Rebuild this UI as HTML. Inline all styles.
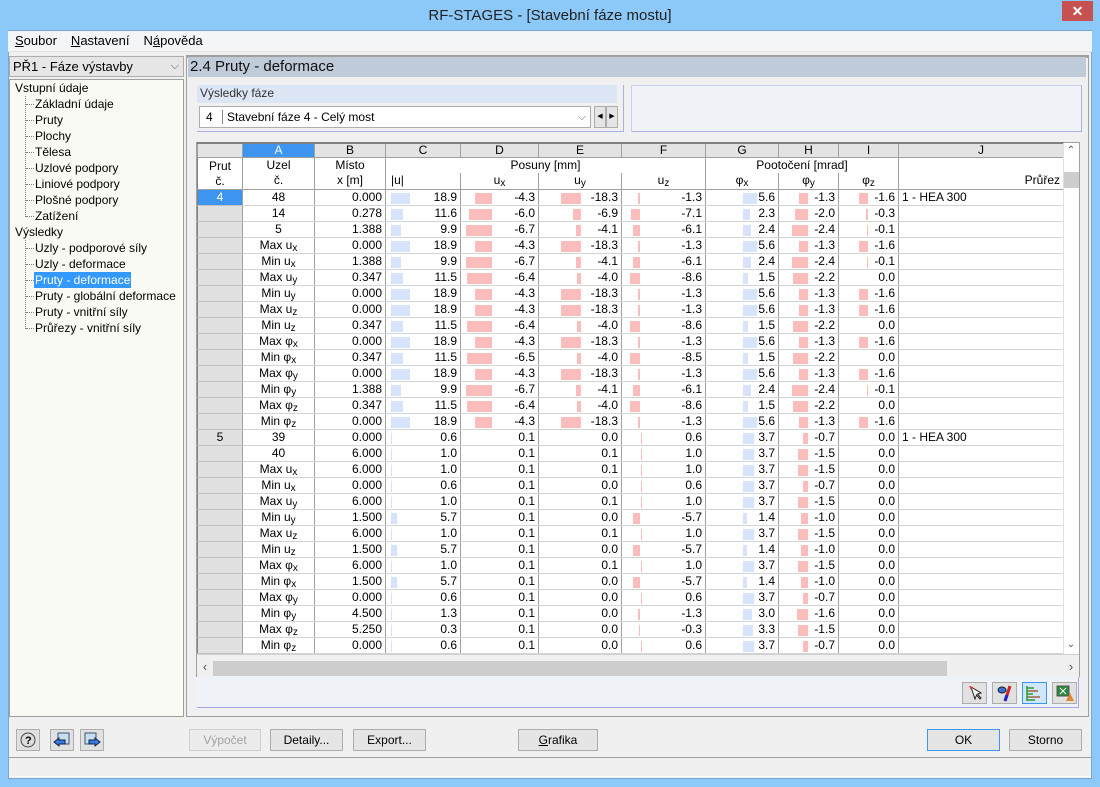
<!DOCTYPE html>
<html><head><meta charset="utf-8"><style>
*{box-sizing:border-box;margin:0;padding:0}
body{width:1100px;height:787px;position:relative;overflow:hidden;background:#8cc8f8;font-family:"Liberation Sans",Arial,sans-serif;font-size:12px;color:#000}
.abs{position:absolute}
#title{left:0;top:0;width:1100px;height:30px;text-align:center;font-size:15px;line-height:32px;color:#222}
#close{left:1062px;top:1px;width:31px;height:20px;background:#c75050;color:#fff;text-align:center;font-size:14px;font-weight:bold;line-height:20px}
#client{left:8px;top:30px;width:1084px;height:749px;background:#f0f0f0;border:1px solid #7aa6d0}
#menu{left:8px;top:31px;width:1084px;height:21px;background:#f4f5f7;font-size:13px;line-height:20px;border-bottom:1px solid #e3e3e3}
#menu span{margin-left:7px;margin-right:7px}
u{text-decoration:underline}
#combo{left:9px;top:56px;width:175px;height:21px;background:#e6e6e6;border:1px solid #adadad;font-size:13px;line-height:19px;padding-left:3px}
#tree{left:9px;top:79px;width:175px;height:638px;background:#fafaf4;border:1px solid #a0a0a0;font-size:12px}
#tree div{position:absolute;height:16px;line-height:16px;white-space:nowrap}
#tree .d{position:absolute;border-top:1px dotted #808080;width:8px}
#tree .v{position:absolute;border-left:1px dotted #808080}
#rpanel{left:186px;top:55px;width:903px;height:662px;border:1px solid #a0a0a0;border-top:3px solid #a0a0a0;background:#f0f0f0}
#hdr{left:188px;top:57px;width:898px;height:20px;background:#bfcbd8;font-size:15px;line-height:20px;padding-left:2px;color:#111}
#grp{left:197px;top:85px;width:427px;height:47px;border-right:1px solid #aab0e0;border-bottom:1px solid #aab0e0}
#grplab{left:197px;top:85px;width:420px;height:18px;background:#dde6f4;font-size:12px;line-height:17px;padding-left:3px;color:#333}
#sel{left:199px;top:106px;width:392px;height:22px;background:#fff;border:1px solid #adadad;line-height:20px;padding-left:6px}
#info{left:631px;top:85px;width:451px;height:47px;background:#eff2f7;border:1px solid #c8cff0;border-right-color:#aab0e0;border-bottom-color:#aab0e0}
table{position:absolute;left:197px;top:142px;border-collapse:collapse;table-layout:fixed;width:866px;font-size:12px}
tr{height:16px}
td,th{height:16px;padding:0 3px 0 0;text-align:right;white-space:nowrap;overflow:hidden;font-weight:normal;position:relative;border-right:1px solid #a0a0a0;border-bottom:1px solid #d4d4d4;line-height:15px;background:#fff}
tr.L{height:14px}
tr.L th,tr.L td{height:14px;line-height:12px;background:#e3e3e3;text-align:center;border:1px solid #a0a0a0;border-top:2px solid #808080;padding:0}
tr.S th,tr.S td{background:#fff;text-align:center;padding:0;border-bottom:none;line-height:15px}
tr.S2 td{border-bottom:1px solid #a0a0a0}
th.rh{background:#e1e1e1;text-align:center;padding:0;border:1px solid #a0a0a0;border-bottom:1px solid #c0c0c0;border-left:1px solid #808080}
th.sel{background:#3d95f0;color:#fff}
td.c{text-align:center;padding:0}
td.j{text-align:left;padding-left:3px}
sub{font-size:10px;line-height:0;vertical-align:-2px}
i{position:absolute;top:3px;height:11px;background:#fbbcbc;width:0}
td:nth-child(4) i{left:5px;background:#d7e3fa}
td:nth-child(5) i{right:46px}
td:nth-child(6) i{right:40px}
td:nth-child(7) i{right:65px}
td:nth-child(8) i{left:37px;background:#d7e3fa}
td:nth-child(9) i{right:30px}
td:nth-child(10) i{right:30px}
.p1 td:nth-child(4) i{width:19px}.p1 td:nth-child(5) i{width:17px}.p1 td:nth-child(6) i{width:20px}.p1 td:nth-child(7) i{width:2px}.p1 td:nth-child(8) i{width:14px}.p1 td:nth-child(9) i{width:9px}.p1 td:nth-child(10) i{width:9px}
.p2 td:nth-child(4) i{width:12px}.p2 td:nth-child(5) i{width:23px}.p2 td:nth-child(6) i{width:8px}.p2 td:nth-child(7) i{width:9px}.p2 td:nth-child(8) i{width:7px}.p2 td:nth-child(9) i{width:13px}.p2 td:nth-child(10) i{width:2px}
.p3 td:nth-child(4) i{width:10px}.p3 td:nth-child(5) i{width:26px}.p3 td:nth-child(6) i{width:5px}.p3 td:nth-child(7) i{width:7px}.p3 td:nth-child(8) i{width:8px}.p3 td:nth-child(9) i{width:16px}.p3 td:nth-child(10) i{width:1px}
.p4 td:nth-child(4) i{width:12px}.p4 td:nth-child(5) i{width:25px}.p4 td:nth-child(6) i{width:4px}.p4 td:nth-child(7) i{width:10px}.p4 td:nth-child(8) i{width:5px}.p4 td:nth-child(9) i{width:15px}
.q1 td:nth-child(4) i{width:1px}.q1 td:nth-child(7) i{width:1px;left:19px;right:auto}.q1 td:nth-child(8) i{width:11px}.q1 td:nth-child(9) i{width:5px}
.q2 td:nth-child(4) i{width:1px}.q2 td:nth-child(7) i{width:1px;left:19px;right:auto}.q2 td:nth-child(8) i{width:11px}.q2 td:nth-child(9) i{width:10px}
.q3 td:nth-child(4) i{width:6px}.q3 td:nth-child(7) i{width:7px}.q3 td:nth-child(8) i{width:4px}.q3 td:nth-child(9) i{width:7px}
.q4 td:nth-child(4) i{width:1px}.q4 td:nth-child(7) i{width:2px}.q4 td:nth-child(8) i{width:9px}.q4 td:nth-child(9) i{width:11px}
.q5 td:nth-child(4) i{width:1px}.q5 td:nth-child(7) i{width:1px}.q5 td:nth-child(8) i{width:10px}.q5 td:nth-child(9) i{width:10px}
.btn{position:absolute;top:729px;height:22px;background:#e5e5e5;border:1px solid #adadad;text-align:center;line-height:20px;font-size:12px}
.ib{position:absolute;top:729px;width:24px;height:22px;background:#e1e1e1;border:1px solid #adadad}
.tb{position:absolute;top:682px;width:25px;height:22px;background:#e1e1e1;border:1px solid #adadad}
</style></head><body>
<div id="title" class="abs">RF-STAGES - [Stavební fáze mostu]</div>
<div id="close" class="abs">✕</div>
<div id="client" class="abs"></div>
<div id="menu" class="abs"><span><u>S</u>oubor</span><span><u>N</u>astavení</span><span>N<u>á</u>pověda</span></div>
<div id="combo" class="abs">PŘ1 - Fáze výstavby<span style="position:absolute;right:4px;top:0;color:#555;font-size:11px">⌵</span></div>
<div id="tree" class="abs">
<div style="left:5px;top:0px">Vstupní údaje</div>
<span class="v" style="left:15px;top:16px;height:121px"></span>
<div style="left:25px;top:16px">Základní údaje</div><span class="d" style="left:16px;top:24px"></span>
<div style="left:25px;top:32px">Pruty</div><span class="d" style="left:16px;top:40px"></span>
<div style="left:25px;top:48px">Plochy</div><span class="d" style="left:16px;top:56px"></span>
<div style="left:25px;top:64px">Tělesa</div><span class="d" style="left:16px;top:72px"></span>
<div style="left:25px;top:80px">Uzlové podpory</div><span class="d" style="left:16px;top:88px"></span>
<div style="left:25px;top:96px">Liniové podpory</div><span class="d" style="left:16px;top:104px"></span>
<div style="left:25px;top:112px">Plošné podpory</div><span class="d" style="left:16px;top:120px"></span>
<div style="left:25px;top:128px">Zatížení</div><span class="d" style="left:16px;top:136px"></span>
<div style="left:5px;top:144px">Výsledky</div>
<span class="v" style="left:15px;top:160px;height:89px"></span>
<div style="left:25px;top:160px">Uzly - podporové síly</div><span class="d" style="left:16px;top:168px"></span>
<div style="left:25px;top:176px">Uzly - deformace</div><span class="d" style="left:16px;top:184px"></span>
<div style="left:24px;top:192px;background:#3399ff;color:#fff;padding:0 1px">Pruty - deformace</div><span class="d" style="left:16px;top:200px"></span>
<div style="left:25px;top:208px">Pruty - globální deformace</div><span class="d" style="left:16px;top:216px"></span>
<div style="left:25px;top:224px">Pruty - vnitřní síly</div><span class="d" style="left:16px;top:232px"></span>
<div style="left:25px;top:240px">Průřezy - vnitřní síly</div><span class="d" style="left:16px;top:248px"></span>
</div>
<div id="rpanel" class="abs"></div>
<div id="hdr" class="abs">2.4 Pruty - deformace</div>
<div id="grp" class="abs"></div>
<div id="grplab" class="abs">Výsledky fáze</div>
<div id="sel" class="abs">4 <span style="border-left:1px solid #888;margin:0 4px 0 6px"></span>Stavební fáze 4 - Celý most<span style="position:absolute;right:4px;top:0;color:#666;font-size:11px">⌵</span></div>
<div class="abs" style="left:594px;top:106px;width:12px;height:22px;border:1px solid #adadad;background:#e5e5e5;font-size:7px;line-height:20px;text-align:center">◀</div>
<div class="abs" style="left:606px;top:106px;width:12px;height:22px;border:1px solid #adadad;background:#e5e5e5;font-size:7px;line-height:20px;text-align:center">▶</div>
<div id="info" class="abs"></div>
<div class="abs" style="left:196px;top:142px;width:884px;height:535px;background:#fff;border:1px solid #a0a0a0"></div>
<table>
<colgroup><col style="width:45px"><col style="width:72px"><col style="width:71px"><col style="width:75px"><col style="width:78px"><col style="width:83px"><col style="width:84px"><col style="width:73px"><col style="width:60px"><col style="width:60px"><col style="width:165px"></colgroup>
<tr class="L"><th style="background:#e3e3e3;border-top:2px solid #808080"></th><td style="background:#3d95f0;color:#fff">A</td><td>B</td><td>C</td><td>D</td><td>E</td><td>F</td><td>G</td><td>H</td><td>I</td><td>J</td></tr>
<tr class="S"><th class="rh" rowspan="2" style="border-bottom:1px solid #a0a0a0;vertical-align:top;padding-top:1px;line-height:15px">Prut<br>č.</th><td>Uzel</td><td>Místo</td><td colspan="4">Posuny [mm]</td><td colspan="3">Pootočení [mrad]</td><td></td></tr>
<tr class="S S2"><td>č.</td><td>x [m]</td><td style="text-align:left;padding-left:5px">|u|</td><td>u<sub>x</sub></td><td>u<sub>y</sub></td><td>u<sub>z</sub></td><td>φ<sub>x</sub></td><td>φ<sub>y</sub></td><td>φ<sub>z</sub></td><td style="text-align:right;padding-right:3px">Průřez</td></tr>
<tr class="p1"><th class="rh sel">4</th><td class="c">48</td><td>0.000</td><td><i></i>18.9</td><td><i></i>-4.3</td><td><i></i>-18.3</td><td><i></i>-1.3</td><td><i></i>5.6</td><td><i></i>-1.3</td><td><i></i>-1.6</td><td class="j">1 - HEA 300</td></tr>
<tr class="p2"><th class="rh"></th><td class="c">14</td><td>0.278</td><td><i></i>11.6</td><td><i></i>-6.0</td><td><i></i>-6.9</td><td><i></i>-7.1</td><td><i></i>2.3</td><td><i></i>-2.0</td><td><i></i>-0.3</td><td></td></tr>
<tr class="p3"><th class="rh"></th><td class="c">5</td><td>1.388</td><td><i></i>9.9</td><td><i></i>-6.7</td><td><i></i>-4.1</td><td><i></i>-6.1</td><td><i></i>2.4</td><td><i></i>-2.4</td><td><i></i>-0.1</td><td></td></tr>
<tr class="p1"><th class="rh"></th><td class="c">Max u<sub>x</sub></td><td>0.000</td><td><i></i>18.9</td><td><i></i>-4.3</td><td><i></i>-18.3</td><td><i></i>-1.3</td><td><i></i>5.6</td><td><i></i>-1.3</td><td><i></i>-1.6</td><td></td></tr>
<tr class="p3"><th class="rh"></th><td class="c">Min u<sub>x</sub></td><td>1.388</td><td><i></i>9.9</td><td><i></i>-6.7</td><td><i></i>-4.1</td><td><i></i>-6.1</td><td><i></i>2.4</td><td><i></i>-2.4</td><td><i></i>-0.1</td><td></td></tr>
<tr class="p4"><th class="rh"></th><td class="c">Max u<sub>y</sub></td><td>0.347</td><td><i></i>11.5</td><td><i></i>-6.4</td><td><i></i>-4.0</td><td><i></i>-8.6</td><td><i></i>1.5</td><td><i></i>-2.2</td><td><i></i>0.0</td><td></td></tr>
<tr class="p1"><th class="rh"></th><td class="c">Min u<sub>y</sub></td><td>0.000</td><td><i></i>18.9</td><td><i></i>-4.3</td><td><i></i>-18.3</td><td><i></i>-1.3</td><td><i></i>5.6</td><td><i></i>-1.3</td><td><i></i>-1.6</td><td></td></tr>
<tr class="p1"><th class="rh"></th><td class="c">Max u<sub>z</sub></td><td>0.000</td><td><i></i>18.9</td><td><i></i>-4.3</td><td><i></i>-18.3</td><td><i></i>-1.3</td><td><i></i>5.6</td><td><i></i>-1.3</td><td><i></i>-1.6</td><td></td></tr>
<tr class="p4"><th class="rh"></th><td class="c">Min u<sub>z</sub></td><td>0.347</td><td><i></i>11.5</td><td><i></i>-6.4</td><td><i></i>-4.0</td><td><i></i>-8.6</td><td><i></i>1.5</td><td><i></i>-2.2</td><td><i></i>0.0</td><td></td></tr>
<tr class="p1"><th class="rh"></th><td class="c">Max φ<sub>x</sub></td><td>0.000</td><td><i></i>18.9</td><td><i></i>-4.3</td><td><i></i>-18.3</td><td><i></i>-1.3</td><td><i></i>5.6</td><td><i></i>-1.3</td><td><i></i>-1.6</td><td></td></tr>
<tr class="p4"><th class="rh"></th><td class="c">Min φ<sub>x</sub></td><td>0.347</td><td><i></i>11.5</td><td><i></i>-6.5</td><td><i></i>-4.0</td><td><i></i>-8.5</td><td><i></i>1.5</td><td><i></i>-2.2</td><td><i></i>0.0</td><td></td></tr>
<tr class="p1"><th class="rh"></th><td class="c">Max φ<sub>y</sub></td><td>0.000</td><td><i></i>18.9</td><td><i></i>-4.3</td><td><i></i>-18.3</td><td><i></i>-1.3</td><td><i></i>5.6</td><td><i></i>-1.3</td><td><i></i>-1.6</td><td></td></tr>
<tr class="p3"><th class="rh"></th><td class="c">Min φ<sub>y</sub></td><td>1.388</td><td><i></i>9.9</td><td><i></i>-6.7</td><td><i></i>-4.1</td><td><i></i>-6.1</td><td><i></i>2.4</td><td><i></i>-2.4</td><td><i></i>-0.1</td><td></td></tr>
<tr class="p4"><th class="rh"></th><td class="c">Max φ<sub>z</sub></td><td>0.347</td><td><i></i>11.5</td><td><i></i>-6.4</td><td><i></i>-4.0</td><td><i></i>-8.6</td><td><i></i>1.5</td><td><i></i>-2.2</td><td><i></i>0.0</td><td></td></tr>
<tr class="p1"><th class="rh"></th><td class="c">Min φ<sub>z</sub></td><td>0.000</td><td><i></i>18.9</td><td><i></i>-4.3</td><td><i></i>-18.3</td><td><i></i>-1.3</td><td><i></i>5.6</td><td><i></i>-1.3</td><td><i></i>-1.6</td><td></td></tr>
<tr class="q1"><th class="rh">5</th><td class="c">39</td><td>0.000</td><td><i></i>0.6</td><td><i></i>0.1</td><td><i></i>0.0</td><td><i></i>0.6</td><td><i></i>3.7</td><td><i></i>-0.7</td><td><i></i>0.0</td><td class="j">1 - HEA 300</td></tr>
<tr class="q2"><th class="rh"></th><td class="c">40</td><td>6.000</td><td><i></i>1.0</td><td><i></i>0.1</td><td><i></i>0.1</td><td><i></i>1.0</td><td><i></i>3.7</td><td><i></i>-1.5</td><td><i></i>0.0</td><td></td></tr>
<tr class="q2"><th class="rh"></th><td class="c">Max u<sub>x</sub></td><td>6.000</td><td><i></i>1.0</td><td><i></i>0.1</td><td><i></i>0.1</td><td><i></i>1.0</td><td><i></i>3.7</td><td><i></i>-1.5</td><td><i></i>0.0</td><td></td></tr>
<tr class="q1"><th class="rh"></th><td class="c">Min u<sub>x</sub></td><td>0.000</td><td><i></i>0.6</td><td><i></i>0.1</td><td><i></i>0.0</td><td><i></i>0.6</td><td><i></i>3.7</td><td><i></i>-0.7</td><td><i></i>0.0</td><td></td></tr>
<tr class="q2"><th class="rh"></th><td class="c">Max u<sub>y</sub></td><td>6.000</td><td><i></i>1.0</td><td><i></i>0.1</td><td><i></i>0.1</td><td><i></i>1.0</td><td><i></i>3.7</td><td><i></i>-1.5</td><td><i></i>0.0</td><td></td></tr>
<tr class="q3"><th class="rh"></th><td class="c">Min u<sub>y</sub></td><td>1.500</td><td><i></i>5.7</td><td><i></i>0.1</td><td><i></i>0.0</td><td><i></i>-5.7</td><td><i></i>1.4</td><td><i></i>-1.0</td><td><i></i>0.0</td><td></td></tr>
<tr class="q2"><th class="rh"></th><td class="c">Max u<sub>z</sub></td><td>6.000</td><td><i></i>1.0</td><td><i></i>0.1</td><td><i></i>0.1</td><td><i></i>1.0</td><td><i></i>3.7</td><td><i></i>-1.5</td><td><i></i>0.0</td><td></td></tr>
<tr class="q3"><th class="rh"></th><td class="c">Min u<sub>z</sub></td><td>1.500</td><td><i></i>5.7</td><td><i></i>0.1</td><td><i></i>0.0</td><td><i></i>-5.7</td><td><i></i>1.4</td><td><i></i>-1.0</td><td><i></i>0.0</td><td></td></tr>
<tr class="q2"><th class="rh"></th><td class="c">Max φ<sub>x</sub></td><td>6.000</td><td><i></i>1.0</td><td><i></i>0.1</td><td><i></i>0.1</td><td><i></i>1.0</td><td><i></i>3.7</td><td><i></i>-1.5</td><td><i></i>0.0</td><td></td></tr>
<tr class="q3"><th class="rh"></th><td class="c">Min φ<sub>x</sub></td><td>1.500</td><td><i></i>5.7</td><td><i></i>0.1</td><td><i></i>0.0</td><td><i></i>-5.7</td><td><i></i>1.4</td><td><i></i>-1.0</td><td><i></i>0.0</td><td></td></tr>
<tr class="q1"><th class="rh"></th><td class="c">Max φ<sub>y</sub></td><td>0.000</td><td><i></i>0.6</td><td><i></i>0.1</td><td><i></i>0.0</td><td><i></i>0.6</td><td><i></i>3.7</td><td><i></i>-0.7</td><td><i></i>0.0</td><td></td></tr>
<tr class="q4"><th class="rh"></th><td class="c">Min φ<sub>y</sub></td><td>4.500</td><td><i></i>1.3</td><td><i></i>0.1</td><td><i></i>0.0</td><td><i></i>-1.3</td><td><i></i>3.0</td><td><i></i>-1.6</td><td><i></i>0.0</td><td></td></tr>
<tr class="q5"><th class="rh"></th><td class="c">Max φ<sub>z</sub></td><td>5.250</td><td><i></i>0.3</td><td><i></i>0.1</td><td><i></i>0.0</td><td><i></i>-0.3</td><td><i></i>3.3</td><td><i></i>-1.5</td><td><i></i>0.0</td><td></td></tr>
<tr class="q1"><th class="rh"></th><td class="c">Min φ<sub>z</sub></td><td>0.000</td><td><i></i>0.6</td><td><i></i>0.1</td><td><i></i>0.0</td><td><i></i>0.6</td><td><i></i>3.7</td><td><i></i>-0.7</td><td><i></i>0.0</td><td></td></tr>
</table>
<div class="abs" style="left:1063px;top:143px;width:16px;height:511px;background:#fff;border-left:1px solid #e0e0e0"></div>
<div class="abs" style="left:1063px;top:143px;width:16px;height:16px;text-align:center;font-size:10px;color:#555;line-height:16px">⌃</div>
<div class="abs" style="left:1064px;top:172px;width:15px;height:16px;background:#cdcdcd"></div>
<div class="abs" style="left:1063px;top:638px;width:16px;height:16px;text-align:center;font-size:10px;color:#555;line-height:14px">⌄</div>
<div class="abs" style="left:197px;top:654px;width:882px;height:23px;background:#f0f0f0;border-top:1px solid #d0d0d0"></div>
<div class="abs" style="left:197px;top:658px;width:16px;height:19px;text-align:center;line-height:18px;color:#555;font-size:13px">‹</div>
<div class="abs" style="left:213px;top:661px;width:734px;height:15px;background:#cdcdcd"></div>
<div class="abs" style="left:1063px;top:658px;width:16px;height:19px;text-align:center;line-height:18px;color:#555;font-size:13px">›</div>
<div class="abs" style="left:197px;top:677px;width:882px;height:31px;background:#eff2f7;border-bottom:1px solid #a8a8e8;border-right:1px solid #a8a8e8"></div>
<div class="tb" style="left:962px"><svg width="23" height="20"><path d="M8 4 L12 16 L13.5 12 L17 16 L18 15 L14.5 11 L18 10 Z" fill="#fff" stroke="#222"/><path d="M6 3 l4 1 -2 3z" fill="#d33"/></svg></div>
<div class="tb" style="left:992px"><svg width="23" height="20"><ellipse cx="9" cy="7" rx="4" ry="3" fill="#3a6fd0" stroke="#123"/><path d="M17 3 L12 18" stroke="#c22" stroke-width="3"/><path d="M14 12 L12 18" stroke="#22c" stroke-width="3"/></svg></div>
<div class="tb" style="left:1022px;border-color:#3d95f0;background:#cfe6fb"><svg width="23" height="20"><path d="M4 3v15M4 5h7M4 8h11M4 11h6M4 14h13M4 17h8" stroke="#393" stroke-width="1.5"/><path d="M6 8h9M6 14h11" stroke="#d44" stroke-width="1"/></svg></div>
<div class="tb" style="left:1052px"><svg width="23" height="20"><rect x="4" y="3" width="12" height="10" fill="#2a8a3a" stroke="#555"/><path d="M7 5l6 6M13 5l-6 6" stroke="#fff"/><path d="M13 18l4-8 4 8z" fill="#d83"/></svg></div>
<div class="ib" style="left:16px"><svg width="22" height="20"><circle cx="11" cy="10" r="7" fill="#ddd" stroke="#444"/><text x="8" y="14" font-size="11" font-family="Liberation Sans" font-weight="bold">?</text></svg></div>
<div class="ib" style="left:50px"><svg width="22" height="20"><rect x="7" y="3" width="11" height="11" fill="#cde" stroke="#357"/><path d="M3 12l5-4v2h6v4h-6v2z" fill="#3a7be0" stroke="#124"/></svg></div>
<div class="ib" style="left:80px"><svg width="22" height="20"><rect x="4" y="3" width="11" height="11" fill="#cde" stroke="#357"/><path d="M19 12l-5-4v2h-6v4h6v2z" fill="#3a7be0" stroke="#124"/></svg></div>
<div class="btn" style="left:189px;width:72px;color:#a0a0a0;border-color:#d0d0d0;background:#ececec">Výpočet</div>
<div class="btn" style="left:270px;width:73px">Detaily...</div>
<div class="btn" style="left:353px;width:73px">Export...</div>
<div class="btn" style="left:518px;width:80px"><u>G</u>rafika</div>
<div class="btn" style="left:927px;width:73px;border-color:#3d95f0">OK</div>
<div class="btn" style="left:1009px;width:73px">Storno</div>
<div class="abs" style="left:9px;top:757px;width:1082px;height:1px;background:#a0a0a0"></div>
<div class="abs" style="left:9px;top:776px;width:1082px;height:1px;background:#fff"></div>
</body></html>
